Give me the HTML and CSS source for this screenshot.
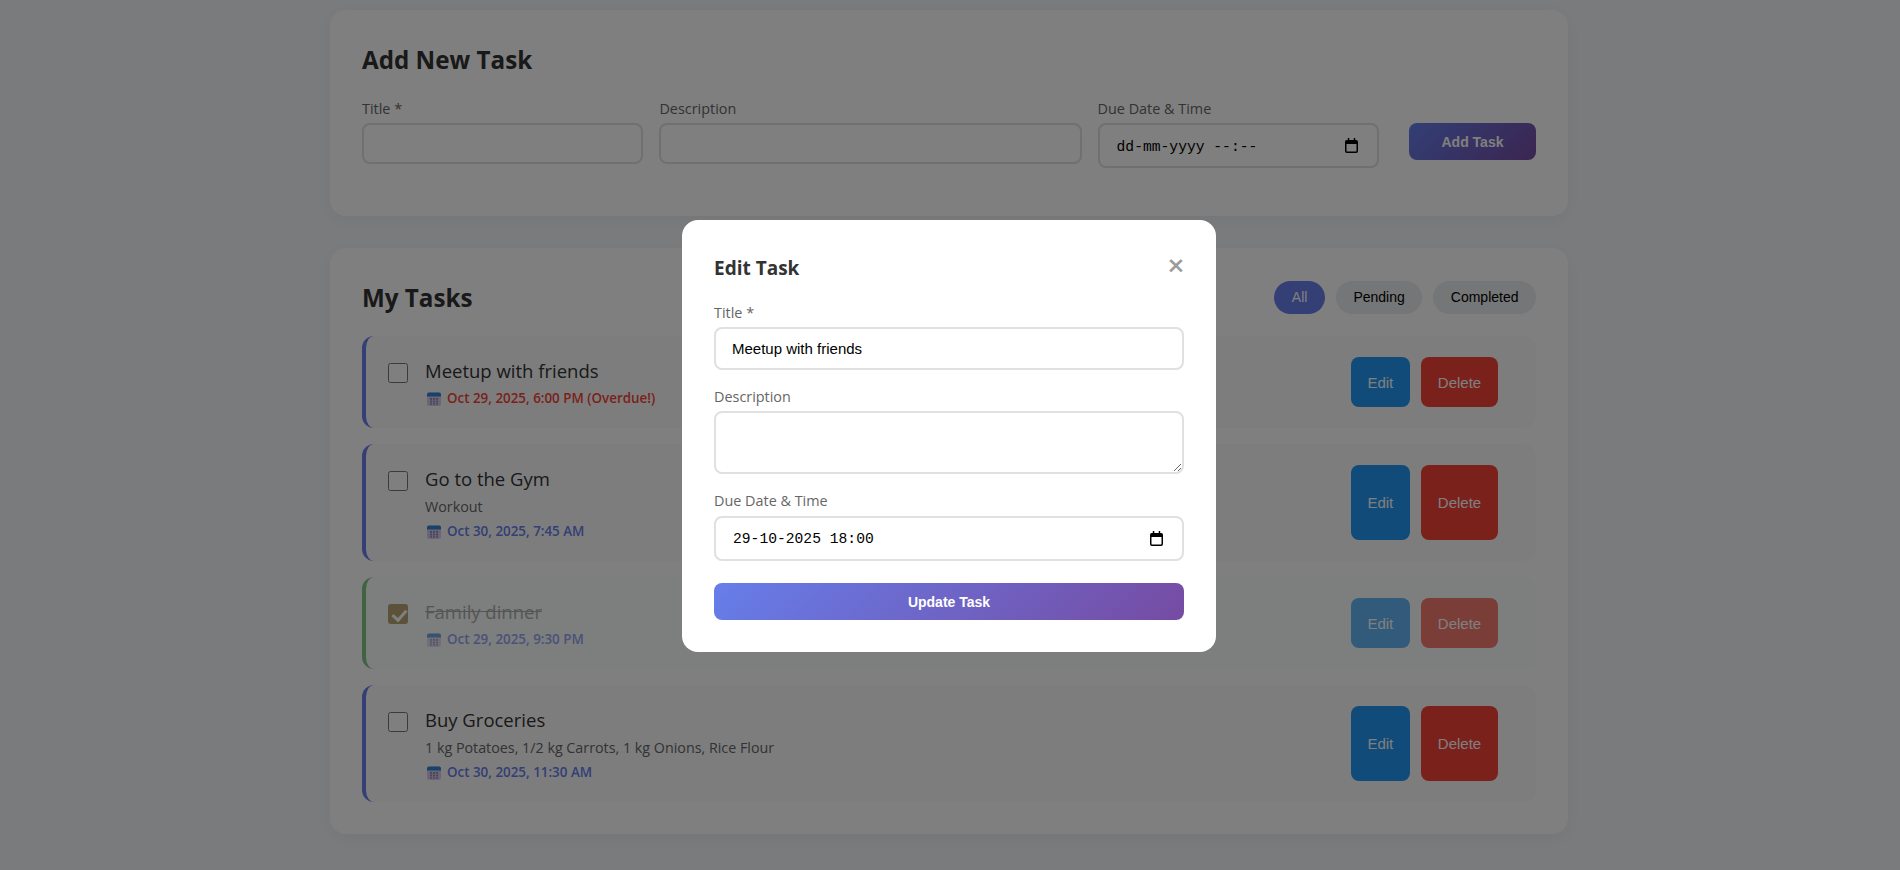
FILE: index.html
```html
<!DOCTYPE html>
<html lang="en">
<head>
    <meta charset="UTF-8">
    <meta name="viewport" content="width=device-width, initial-scale=1.0">
    <title>Task Manager</title>
    <link rel="stylesheet" href="styles.css">
</head>
<body>
    <svg class="defs" width="0" height="0">
        <symbol id="cal-emoji" viewBox="0 0 14 14">
            <rect x="0" y="0.5" width="14" height="13.5" rx="2" fill="#d9cbf0"/>
            <path d="M0 4.5V2.5a2 2 0 0 1 2-2h10a2 2 0 0 1 2 2v2z" fill="#2f86d6"/>
            <g fill="#8f88ad">
                <rect x="3" y="6" width="2" height="1.8"/><rect x="6" y="6" width="2" height="1.8"/><rect x="9" y="6" width="2" height="1.8"/>
                <rect x="3" y="8.6" width="2" height="1.8"/><rect x="6" y="8.6" width="2" height="1.8"/><rect x="9" y="8.6" width="2" height="1.8"/>
                <rect x="3" y="11.2" width="2" height="1.4"/><rect x="6" y="11.2" width="2" height="1.4"/><rect x="9" y="11.2" width="2" height="1.4"/>
            </g>
        </symbol>
        <symbol id="cal-native" viewBox="0 0 14 16">
            <path d="M3 0h1.6v2h4.8V0H11v2h1a2 2 0 0 1 2 2v10a2 2 0 0 1-2 2H2a2 2 0 0 1-2-2V4a2 2 0 0 1 2-2h1zM1.6 6.4V14c0 .2.2.4.4.4h10c.2 0 .4-.2.4-.4V6.4z" fill="#000"/>
        </symbol>
    </svg>

    <div class="container">
        <section class="card add-card">
            <h2>Add New Task</h2>
            <form class="add-form">
                <div class="form-group">
                    <label for="title">Title *</label>
                    <input type="text" id="title">
                </div>
                <div class="form-group">
                    <label for="description">Description</label>
                    <input type="text" id="description">
                </div>
                <div class="form-group">
                    <label>Due Date &amp; Time</label>
                    <div class="date-input">
                        <span>dd-mm-yyyy --:--</span>
                        <svg class="cal-native"><use href="#cal-native"/></svg>
                    </div>
                </div>
                <button type="button" class="btn-primary add-btn">Add Task</button>
            </form>
        </section>

        <section class="card tasks-card">
            <div class="tasks-header">
                <h2>My Tasks</h2>
                <div class="filters">
                    <button class="filter active">All</button>
                    <button class="filter">Pending</button>
                    <button class="filter">Completed</button>
                </div>
            </div>
            <div class="task-list">
                <div class="task">
                    <input type="checkbox" class="task-check">
                    <div class="task-body">
                        <div class="task-title">Meetup with friends</div>
                        <div class="task-due overdue"><svg class="cal-emoji"><use href="#cal-emoji"/></svg>Oct 29, 2025, 6:00 PM (Overdue!)</div>
                    </div>
                    <div class="task-actions">
                        <button class="btn-edit">Edit</button>
                        <button class="btn-delete">Delete</button>
                    </div>
                </div>
                <div class="task">
                    <input type="checkbox" class="task-check">
                    <div class="task-body">
                        <div class="task-title">Go to the Gym</div>
                        <div class="task-desc">Workout</div>
                        <div class="task-due"><svg class="cal-emoji"><use href="#cal-emoji"/></svg>Oct 30, 2025, 7:45 AM</div>
                    </div>
                    <div class="task-actions">
                        <button class="btn-edit">Edit</button>
                        <button class="btn-delete">Delete</button>
                    </div>
                </div>
                <div class="task completed">
                    <input type="checkbox" class="task-check" checked>
                    <div class="task-body">
                        <div class="task-title">Family dinner</div>
                        <div class="task-due"><svg class="cal-emoji"><use href="#cal-emoji"/></svg>Oct 29, 2025, 9:30 PM</div>
                    </div>
                    <div class="task-actions">
                        <button class="btn-edit">Edit</button>
                        <button class="btn-delete">Delete</button>
                    </div>
                </div>
                <div class="task">
                    <input type="checkbox" class="task-check">
                    <div class="task-body">
                        <div class="task-title">Buy Groceries</div>
                        <div class="task-desc">1 kg Potatoes, 1/2 kg Carrots, 1 kg Onions, Rice Flour</div>
                        <div class="task-due"><svg class="cal-emoji"><use href="#cal-emoji"/></svg>Oct 30, 2025, 11:30 AM</div>
                    </div>
                    <div class="task-actions">
                        <button class="btn-edit">Edit</button>
                        <button class="btn-delete">Delete</button>
                    </div>
                </div>
            </div>
        </section>
    </div>

    <div class="overlay">
        <div class="modal">
            <div class="modal-header">
                <h3>Edit Task</h3>
                <span class="close">&times;</span>
            </div>
            <div class="modal-group">
                <label for="editTitle">Title *</label>
                <input type="text" id="editTitle" value="Meetup with friends">
            </div>
            <div class="modal-group">
                <label for="editDescription">Description</label>
                <textarea id="editDescription"></textarea>
            </div>
            <div class="modal-group last">
                <label>Due Date &amp; Time</label>
                <div class="date-input">
                    <span>29-10-2025 18:00</span>
                    <svg class="cal-native"><use href="#cal-native"/></svg>
                </div>
            </div>
            <button class="btn-primary update-btn">Update Task</button>
        </div>
    </div>
</body>
</html>
```

FILE: styles.css
```css
* {
    box-sizing: border-box;
}
html, body {
    height: 100%;
}
body {
    margin: 0;
    padding-right: 2px;
    background-color: #f5f7fa;
    color: #333;
    font-family: "Open Sans", "Noto Sans", sans-serif;
    overflow: hidden;
}
.defs {
    position: absolute;
}
.container {
    width: 1238px;
    margin: 0 auto;
    padding-top: 10px;
}
.card {
    background-color: #fff;
    border-radius: 16px;
    padding: 32px;
    margin-bottom: 32px;
    box-shadow: 0 4px 20px rgba(0, 0, 0, 0.05);
}
h2 {
    margin: 0;
    padding-top: 1px;
    font-size: 24.2px;
    line-height: 33px;
    font-weight: 700;
}
.add-card h2 {
    margin-bottom: 23px;
}
.add-form {
    display: grid;
    grid-template-columns: 1fr 1.5fr 1fr auto;
    column-gap: 16px;
    align-items: start;
    padding-bottom: 16px;
}
label {
    display: block;
    font-size: 14.4px;
    line-height: 19px;
    font-weight: 500;
    color: #666;
    margin-bottom: 5px;
}
input[type="text"], textarea {
    display: block;
    width: 100%;
    border: 2px solid #e0e0e0;
    border-radius: 8px;
    padding: 12px 16px;
    font-family: "Liberation Sans", Arial, sans-serif;
    font-size: 15px;
    line-height: 17px;
    color: #000;
    background-color: #fff;
    outline: none;
}
.add-form input[type="text"] {
    height: 41px;
}
.date-input {
    display: flex;
    align-items: center;
    justify-content: space-between;
    height: 45px;
    border: 2px solid #e0e0e0;
    border-radius: 8px;
    padding: 0 19px 0 17px;
    font-family: "Liberation Mono", "DejaVu Sans Mono", monospace;
    font-size: 14.67px;
    color: #000;
    background-color: #fff;
}
.date-input span {
    margin-top: 1px;
}
.add-form .date-input span {
    margin-top: 3px;
}
.cal-native {
    width: 13px;
    height: 15px;
}
.btn-primary {
    border: none;
    border-radius: 8px;
    background: linear-gradient(135deg, #667eea 0%, #764ba2 100%);
    color: #fff;
    font-family: "Liberation Sans", Arial, sans-serif;
    font-size: 14px;
    font-weight: 700;
    height: 37px;
}
.add-btn {
    width: 127px;
    margin: 24px 0 0 14px;
}
.tasks-header {
    display: flex;
    justify-content: space-between;
    align-items: center;
    margin-bottom: 22px;
}
.filters {
    display: flex;
    gap: 11px;
}
.filter {
    border: none;
    border-radius: 20px;
    padding: 8.5px 17.5px;
    background-color: #e9ecef;
    color: #000;
    font-family: "Liberation Sans", Arial, sans-serif;
    font-size: 14px;
    line-height: 16px;
}
.filter.active {
    background-color: #667eea;
    color: #fff;
}
.task-list {
    display: flex;
    flex-direction: column;
    gap: 16px;
}
.task {
    display: flex;
    align-items: stretch;
    gap: 17px;
    padding: 21px 38px 21px 22px;
    background-color: #fafbfc;
    border-left: 4px solid #667eea;
    border-radius: 12px;
}
.task.completed {
    opacity: 0.7;
    border-left-color: #4caf50;
}
.task-check {
    width: 20px;
    height: 20px;
    margin: 6px 0 0;
    flex-shrink: 0;
}
.task-check:checked {
    appearance: none;
    position: relative;
    border-radius: 3px;
    background-color: #9c7f38;
}
.task-check:checked::after {
    content: "";
    position: absolute;
    left: 7px;
    top: 3px;
    width: 6px;
    height: 11px;
    border: solid #fff;
    border-width: 0 3px 3px 0;
    transform: rotate(42deg);
}
.task-body {
    flex: 1;
    margin-bottom: -3px;
}
.task-title {
    padding-bottom: 2px;
    font-size: 18.5px;
    line-height: 27px;
    font-weight: 500;
    color: #333;
}
.completed .task-title {
    text-decoration: line-through;
    color: #888;
}
.task-desc {
    font-size: 14.3px;
    line-height: 25px;
    color: #666;
}
.task-due {
    display: flex;
    align-items: center;
    gap: 6.5px;
    padding-top: 1px;
    font-size: 13.4px;
    line-height: 23px;
    font-weight: 600;
    color: #667eea;
}
.task-due.overdue {
    color: #f44336;
}
.cal-emoji {
    width: 14px;
    height: 14px;
    margin-left: 1.5px;
}
.task-actions {
    display: flex;
    gap: 11px;
}
.task-actions button {
    border: none;
    border-radius: 8px;
    padding: 0 16.8px;
    color: #fff;
    font-family: "Liberation Sans", Arial, sans-serif;
    font-size: 15px;
}
.btn-edit {
    background-color: #2196f3;
}
.btn-delete {
    background-color: #f44336;
}
.overlay {
    position: fixed;
    top: 0;
    left: 0;
    right: 0;
    bottom: 0;
    display: flex;
    align-items: center;
    justify-content: center;
    padding: 2px 2px 0 0;
    background-color: rgba(0, 0, 0, 0.5);
}
.modal {
    width: 534px;
    padding: 34px 32px 32px;
    background-color: #fff;
    border-radius: 16px;
}
.modal-header {
    display: flex;
    justify-content: space-between;
    align-items: center;
    margin-bottom: 22px;
}
h3 {
    margin: 1px 0 -1px;
    font-size: 19px;
    line-height: 27px;
    font-weight: 700;
}
.close {
    margin-top: -4px;
    font-family: "Liberation Sans", Arial, sans-serif;
    font-size: 28px;
    line-height: 27px;
    color: #999;
    -webkit-text-stroke: 0.5px #999;
}
.modal-group {
    margin-bottom: 17px;
}
.modal-group.last {
    margin-bottom: 22px;
}
.modal-group.last label {
    margin-bottom: 6px;
}
.modal-group input[type="text"] {
    height: 43px;
}
textarea {
    height: 63px;
    resize: vertical;
}
.update-btn {
    display: block;
    width: 100%;
}
```
